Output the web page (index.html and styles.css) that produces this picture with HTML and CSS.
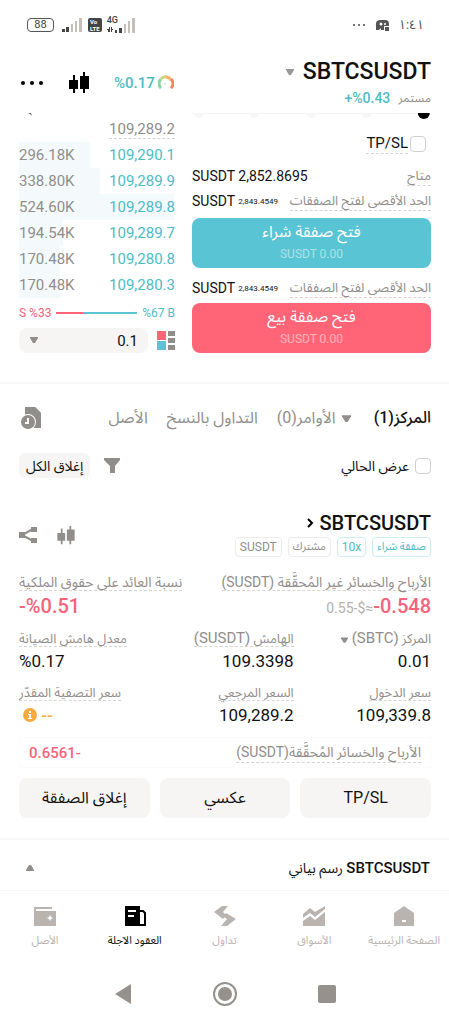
FILE: index.html
```html
<!DOCTYPE html>
<html lang="ar" dir="rtl">
<head>
    <meta charset="UTF-8">
    <meta name="viewport" content="width=device-width, initial-scale=1.0">
    <title>SBTCSUSDT</title>
    <link rel="stylesheet" href="styles.css">
</head>
<body>
    <!-- Status Bar -->
    <div class="status-bar">
        <div class="status-group">
            <span class="clock">١:٤١</span>
            <svg width="15" height="13" viewBox="0 0 15 13"><path d="M1 11V6a4 4 0 0 1 4-5h5a4 4 0 0 1 4 4v2H9v4H6V9L4 11z" fill="#555"/><circle cx="6" cy="5" r="1.5" fill="#fff"/><circle cx="10" cy="5" r="1" fill="#fff"/><path d="M10 8h4v4h-4z" fill="#555"/></svg>
            <svg width="14" height="4" viewBox="0 0 14 4" fill="#444"><circle cx="2" cy="2" r="1"/><circle cx="7" cy="2" r="1"/><circle cx="12" cy="2" r="1"/></svg>
        </div>
        <div class="status-group status-left" dir="ltr">
            <span class="battery">88</span>
            <svg width="21" height="14" viewBox="0 0 21 14"><path d="M0 11h3v3H0zM4 9h3v5H4z" fill="#444"/><path d="M9 6h2v8H9zM13 3h2v11h-2zM17 0h3v14h-3z" fill="#c6bfb9"/></svg>
            <span class="volte">Vo<br>LTE</span>
            <span class="network">
                <span class="network-type">4G</span>
                <svg width="28" height="15" viewBox="0 0 28 15"><path d="M0 11h2V9h1v5H1v-2H0zM4 9h1v2h1v1H5v2H4zM8 12h2v3H8zM12 10h3v5h-3z" fill="#444"/><path d="M17 6h2v9h-2zM21 3h2v12h-2zM25 0h3v15h-3z" fill="#c6bfb9"/></svg>
            </span>
        </div>
    </div>

    <!-- Header -->
    <header class="header">
        <div class="pair">
            <h1><span>SBTCSUSDT</span> <svg width="8" height="6" viewBox="0 0 8 6"><path d="M0 0h8v1L5 6H3L0 1z" fill="#999"/></svg></h1>
            <div class="pair-info"><span>مستمر</span> <span class="change" dir="ltr">+%0.43</span></div>
        </div>
        <div class="header-actions">
            <span class="margin-rate">
                <svg width="16" height="16" viewBox="0 0 16 16" fill="none" stroke-width="3"><path d="M3 13A6 6 0 0 1 3 4" stroke="#8ad7a5"/><path d="M3 4A6 6 0 0 1 9 2" stroke="#cfd77e"/><path d="M8 2A6 6 0 0 1 13 5" stroke="#f6b36b"/><path d="M13 4A6 6 0 0 1 13 13" stroke="#f58462"/><circle cx="7" cy="9" r="1" fill="#ddd"/></svg>
                <span dir="ltr">%0.17</span>
            </span>
            <svg width="20" height="22" viewBox="0 0 20 22"><path d="M0 8h4V3h2v5h3v9H6v4H4v-4H0zM11 4h3V0h2v4h4v13h-4v4h-2v-4h-3z" fill="#000"/></svg>
            <svg width="24" height="6" viewBox="0 0 24 6"><circle cx="3" cy="3" r="2"/><circle cx="12" cy="3" r="2"/><circle cx="21" cy="3" r="2"/></svg>
        </div>
    </header>

    <!-- Trade -->
    <main>
        <section class="trade">
            <form class="order-form">
                <svg class="steps" height="8"><rect width="100%" height="1" fill="#f4f4f4"/><circle cx="3%" cy="0" r="5" fill="#f6f6f6"/><circle cx="26%" cy="0" r="5" fill="#f6f6f6"/><circle cx="50%" cy="0" r="5" fill="#f6f6f6"/><circle cx="73%" cy="0" r="5" fill="#f6f6f6"/><circle cx="97%" cy="0" r="6" fill="#000"/></svg>
                <div class="tpsl">
                    <input type="checkbox" id="tpsl">
                    <label for="tpsl" class="dashed">TP/SL</label>
                </div>
                <div class="form-row available">
                    <span class="dashed muted">متاح</span>
                    <span dir="ltr">SUSDT 2,852.8695</span>
                </div>
                <div class="form-row">
                    <span class="dashed muted">الحد الأقصى لفتح الصفقات</span>
                    <span class="max" dir="ltr">SUSDT <small>2,843.4549</small></span>
                </div>
                <button type="button" class="order-button buy">فتح صفقة شراء<span dir="ltr">SUSDT 0.00</span></button>
                <div class="form-row">
                    <span class="dashed muted">الحد الأقصى لفتح الصفقات</span>
                    <span class="max" dir="ltr">SUSDT <small>2,843.4549</small></span>
                </div>
                <button type="button" class="order-button sell">فتح صفقة بيع<span dir="ltr">SUSDT 0.00</span></button>
            </form>

            <div class="book">
                <svg class="book-edge" width="4" height="3" viewBox="0 0 4 3"><path d="M0 0h3l1 3-2-2z" fill="#666"/></svg>
                <table>
                    <tr class="mark"><td><span class="dashed">109,289.2</span></td><td></td></tr>
                    <tr style="--depth: 46%"><td>109,290.1</td><td>296.18K</td></tr>
                    <tr style="--depth: 52%"><td>109,289.9</td><td>338.80K</td></tr>
                    <tr style="--depth: 100%"><td>109,289.8</td><td>524.60K</td></tr>
                    <tr style="--depth: 28%"><td>109,289.7</td><td>194.54K</td></tr>
                    <tr style="--depth: 26%"><td>109,280.8</td><td>170.48K</td></tr>
                    <tr style="--depth: 26%"><td>109,280.3</td><td>170.48K</td></tr>
                </table>
                <div class="ratio" dir="ltr">
                    <span class="red">S %33</span>
                    <span class="ratio-bar"><i style="width: 33%"></i></span>
                    <span class="teal">%67 B</span>
                </div>
                <div class="book-tools">
                    <svg width="18" height="19" viewBox="0 0 18 19"><path d="M0 0h9v9H0z" fill="#ff6577"/><path d="M0 10h9v9H0z" fill="#58c4d4"/><path d="M11 0h7v5h-7zM11 7h7v5h-7zM11 14h7v5h-7z" fill="#918d8b"/></svg>
                    <div class="select">
                        <select aria-label="الدقة"><option>0.1</option></select>
                        <svg width="8" height="6" viewBox="0 0 8 6"><path d="M0 0h8v1L5 6H3L0 1z" fill="#918d8b"/></svg>
                    </div>
                </div>
            </div>
        </section>

        <!-- Positions -->
        <section class="positions">
            <nav class="tabs">
                <a href="#" class="active">المركز(1)</a>
                <a href="#"><svg width="9" height="7" viewBox="0 0 8 6"><path d="M0 0h8v1L5 6H3L0 1z" fill="#918d8b"/></svg>الأوامر(0)</a>
                <a href="#">التداول بالنسخ</a>
                <a href="#">الأصل</a>
                <svg class="history" width="20" height="22" viewBox="0 0 20 22"><path d="M4 0h10l6 6v15h-7V8H4z" fill="#918d8b"/><path d="M4 0h10l6 6v15H4z" fill="#918d8b"/><circle cx="7" cy="15" r="8" fill="#fff"/><circle cx="7" cy="15" r="7" fill="#918d8b"/><path d="M7 11v5H4" fill="none" stroke="#fff" stroke-width="2"/></svg>
            </nav>
            <div class="filter-row">
                <input type="checkbox" id="current">
                <label for="current">عرض الحالي</label>
                <svg class="filter-icon" width="16" height="15" viewBox="0 0 16 15"><path d="M0 0h16v2l-5 6v7H6V8L0 2z" fill="#918d8b"/></svg>
                <button type="button" class="close-all">إغلاق الكل</button>
            </div>

            <article class="position">
                <div class="position-head">
                    <h2>SBTCSUSDT <svg width="7" height="12" viewBox="0 0 7 12"><path d="M1 1l4 4-4 4" fill="none" stroke="#000" stroke-width="2"/></svg></h2>
                    <div class="position-icons">
                        <svg width="18" height="19" viewBox="0 0 20 22"><path d="M0 8h4V3h2v5h3v9H6v4H4v-4H0zM11 4h3V0h2v4h4v13h-4v4h-2v-4h-3z" fill="#918d8b"/></svg>
                        <svg width="18" height="18" viewBox="0 0 18 18"><path d="M14 3L3 9l11 6" fill="none" stroke="#918d8b" stroke-width="2"/><path d="M12 1h6v5h-6zM0 6h6v6H0zM12 12h6v5h-6z" fill="#918d8b"/></svg>
                    </div>
                </div>
                <div class="tags">
                    <span class="tag tag-teal">صفقة شراء</span>
                    <span class="tag tag-teal tag-latin">10x</span>
                    <span class="tag">مشترك</span>
                    <span class="tag tag-latin">SUSDT</span>
                </div>
                <dl class="pnl">
                    <div>
                        <dt><span class="dashed">الأرباح والخسائر غير المُحقَّقة (SUSDT)</span></dt>
                        <dd class="red" dir="ltr"><small>0.55-$≈</small>-0.548</dd>
                    </div>
                    <div>
                        <dt><span class="dashed">نسبة العائد على حقوق الملكية</span></dt>
                        <dd class="red" dir="ltr">-%0.51</dd>
                    </div>
                </dl>
                <dl class="stats">
                    <div>
                        <dt>المركز <bdi>(SBTC)</bdi> <svg width="7" height="6" viewBox="0 0 8 6"><path d="M0 0h8v1L5 6H3L0 1z" fill="#918d8b"/></svg></dt>
                        <dd>0.01</dd>
                    </div>
                    <div>
                        <dt><span class="dashed">الهامش <bdi>(SUSDT)</bdi></span></dt>
                        <dd>109.3398</dd>
                    </div>
                    <div>
                        <dt><span class="dashed">معدل هامش الصيانة</span></dt>
                        <dd dir="ltr">%0.17</dd>
                    </div>
                    <div>
                        <dt><span class="dashed">سعر الدخول</span></dt>
                        <dd>109,339.8</dd>
                    </div>
                    <div>
                        <dt><span class="dashed">السعر المرجعي</span></dt>
                        <dd>109,289.2</dd>
                    </div>
                    <div>
                        <dt><span class="dashed">سعر التصفية المقدّر</span></dt>
                        <dd class="warning" dir="ltr"><svg width="14" height="14" viewBox="0 0 14 14"><circle cx="7" cy="7" r="7" fill="#f9aa3f"/><path d="M5 6h3v4h1v1H5v-1h1V7H5zM6 3h2v2H6z" fill="#fff"/></svg> --</dd>
                    </div>
                </dl>
                <div class="realized">
                    <span class="dashed">الأرباح والخسائر المُحقَّقة(SUSDT)</span>
                    <span class="red" dir="ltr">0.6561-</span>
                </div>
                <div class="position-actions">
                    <button type="button">TP/SL</button>
                    <button type="button">عكسي</button>
                    <button type="button">إغلاق الصفقة</button>
                </div>
            </article>
        </section>
    </main>

    <div class="chart-bar">
        <span><b>SBTCSUSDT</b> رسم بياني</span>
        <svg width="8" height="6" viewBox="0 0 8 6"><path d="M0 6h8V5L5 0H3L0 5z" fill="#918d8b"/></svg>
    </div>

    <!-- Bottom Navigation -->
    <nav class="bottom-nav">
        <a href="#"><svg width="22" height="22" viewBox="0 0 22 22"><path d="M11 1l10 7v13H1V8z" fill="#bab4b0"/><path d="M9 15h4v2H9z" fill="#fff"/></svg>الصفحة الرئيسية</a>
        <a href="#"><svg width="22" height="22" viewBox="0 0 22 22"><path d="M0 21v-5l7-5 5 4L22 7v14z" fill="#bab4b0"/><path d="M0 13v-4l7-6 5 4L22 1v3L12 12 7 8z" fill="#bab4b0"/></svg>الأسواق</a>
        <a href="#"><svg width="22" height="22" viewBox="0 0 22 22"><path d="M8 1h6L9 7l3 3-3 4-9-7zM12 8l10 6-9 7H7l6-7-3-2z" fill="#bab4b0"/></svg>تداول</a>
        <a href="#" class="active"><svg width="22" height="22" viewBox="0 0 22 22"><path d="M1 1h15v20H1z" fill="#000"/><path d="M16 6h3l2 2v12h-5" fill="none" stroke="#000" stroke-width="2"/><path d="M4 6h8M4 11h6" stroke="#fff" stroke-width="2"/></svg>العقود الآجلة</a>
        <a href="#"><svg width="22" height="22" viewBox="0 0 22 22"><path d="M0 2h18v2H2v2h20v15H0z" fill="#bab4b0"/><path d="M16 10l1 2 2 1-2 1-1 2-1-2-2-1 2-1z" fill="#fff"/></svg>الأصل</a>
    </nav>

    <div class="system-nav">
        <svg width="18" height="18" viewBox="0 0 18 18"><rect width="18" height="18" rx="2" fill="#96918d"/></svg>
        <svg width="26" height="26" viewBox="0 0 26 26"><circle cx="13" cy="13" r="11" fill="none" stroke="#96918d" stroke-width="2"/><circle cx="13" cy="13" r="7" fill="#96918d"/></svg>
        <svg width="18" height="22" viewBox="0 0 18 22"><path d="M1 11L17 1v20z" fill="#96918d"/></svg>
    </div>
</body>
</html>
```

FILE: styles.css
```css
/* General Styles */
* {
    margin: 0;
    padding: 0;
    box-sizing: border-box;
}

body {
    background-color: #fff;
    color: #111;
    font-family: Roboto, "Noto Sans Arabic", "DejaVu Sans", sans-serif;
    font-size: 14px;
    line-height: 20px;
}

button,
input,
select {
    font: inherit;
    color: inherit;
    border: none;
}

a {
    color: inherit;
    text-decoration: none;
}

svg {
    flex-shrink: 0;
}

input[type="checkbox"] {
    appearance: none;
    width: 16px;
    height: 16px;
    border: 1px solid #d2cecb;
    border-radius: 4px;
}

.dashed {
    border-bottom: 1px dashed #d8d4d2;
}

.muted {
    color: #918d8b;
}

.red {
    color: #f4647a;
}

.teal {
    color: #4dbcc4;
}

/* Status Bar */
.status-bar {
    display: flex;
    justify-content: space-between;
    align-items: center;
    height: 50px;
    padding: 0 25px 0 27px;
}

.status-group {
    display: flex;
    align-items: center;
    gap: 9px;
}

.status-left {
    gap: 5px;
}

.clock {
    color: #555;
    font-size: 13px;
}

.battery {
    width: 27px;
    margin-right: 3px;
    border: 1px solid #555;
    border-radius: 4px;
    color: #444;
    font-size: 11px;
    line-height: 12px;
    text-align: center;
}

.volte {
    padding: 0 2px;
    border-radius: 2px;
    background: #444;
    color: #fff;
    font-size: 6px;
    font-weight: 700;
    line-height: 7px;
}

.network {
    position: relative;
    display: flex;
}

.network-type {
    position: absolute;
    top: -3px;
    left: 0;
    color: #444;
    font-size: 9px;
    font-weight: 500;
    line-height: 10px;
}

/* Header */
.header {
    display: flex;
    justify-content: space-between;
    height: 63px;
    padding: 8px 18px 0 20px;
}

.header h1 {
    display: flex;
    align-items: center;
    gap: 9px;
    font-size: 23px;
    font-weight: 500;
    line-height: 28px;
}

.pair-info {
    display: flex;
    gap: 8px;
    line-height: 24px;
    color: #918d8b;
    font-size: 12px;
}

.change {
    color: #4dbcc4;
    font-size: 14px;
    font-weight: 500;
}

.header-actions {
    display: flex;
    align-items: center;
    gap: 25px;
    height: 50px;
}

.margin-rate {
    display: flex;
    align-items: center;
    gap: 3px;
    color: #4dbcc4;
    font-size: 15px;
    font-weight: 500;
}

/* Trade */
.trade {
    display: grid;
    grid-template-columns: 239fr 156fr;
    gap: 17px;
    padding: 0 18px 29px 19px;
    border-bottom: 2px solid #f9f9f9;
}

.steps {
    display: block;
    width: 100%;
}

.tpsl {
    display: flex;
    align-items: center;
    gap: 2px;
    margin: 13px 5px 12px;
    font-size: 15px;
    line-height: 19px;
}

.form-row {
    display: flex;
    justify-content: space-between;
    align-items: center;
    height: 20px;
    white-space: nowrap;
}

.form-row .dashed {
    font-size: 13px;
    line-height: 18px;
}

.available {
    margin-bottom: 5px;
}

.max small {
    font-size: 8px;
    vertical-align: 2px;
}

.order-button {
    display: block;
    width: 100%;
    height: 50px;
    margin: 7px 0 10px;
    border-radius: 8px;
    color: #fff;
    font-size: 16px;
    line-height: 22px;
}

.order-button span {
    display: block;
    opacity: 0.5;
    font-size: 12px;
}

.buy {
    background: #58c4d4;
}

.sell {
    margin: 5px 0 0;
    background: #ff6577;
}

/* Order Book */
.book-edge {
    display: block;
    margin-right: auto;
    margin-left: 9px;
}

.book table {
    width: 100%;
    border-collapse: collapse;
    font-size: 15px;
}

.book tr {
    height: 26px;
    background: linear-gradient(to right, #f4fafc var(--depth, 0%), transparent var(--depth, 0%));
}

.book td {
    color: #4dbcc4;
}

.book td:last-child {
    color: #918d8b;
    text-align: left;
}

.book .mark td {
    color: #918d8b;
}

.ratio {
    display: flex;
    align-items: center;
    gap: 5px;
    margin: 5px 0;
    font-size: 12px;
}

.ratio-bar {
    flex: 1;
    height: 2px;
    background: #58c4d4;
}

.ratio-bar i {
    display: block;
    height: 2px;
    background: #ff6577;
}

.book-tools {
    display: flex;
    align-items: center;
    gap: 9px;
}

.select {
    position: relative;
    flex: 1;
}

.select select {
    appearance: none;
    display: block;
    width: 100%;
    height: 25px;
    padding: 0 10px;
    border-radius: 8px;
    background: #f7f5f4;
    font-size: 15px;
}

.select svg {
    position: absolute;
    top: 9px;
    left: 11px;
    pointer-events: none;
}

/* Tabs */
.tabs {
    display: flex;
    align-items: center;
    gap: 19px;
    padding: 22px 18px 0 21px;
    color: #918d8b;
    font-size: 16px;
    line-height: 24px;
    white-space: nowrap;
}

.tabs a {
    display: flex;
    align-items: center;
    gap: 6px;
}

.tabs .active {
    margin-left: 4px;
    color: #111;
    font-weight: 500;
}

.history {
    margin-right: auto;
}

.filter-row {
    display: flex;
    align-items: center;
    gap: 6px;
    padding: 23px 18px 0 19px;
    font-size: 14px;
}

.filter-icon {
    margin-right: auto;
}

.close-all {
    height: 25px;
    margin-right: 8px;
    padding: 0 7px;
    border-radius: 6px;
    background: #f7f5f4;
}

/* Position Card */
.position {
    padding: 33px 18px 20px 19px;
}

.position-head {
    display: flex;
    justify-content: space-between;
    height: 26px;
}

.position h2 {
    font-size: 20px;
    font-weight: 500;
    line-height: 24px;
}

.position-icons {
    display: flex;
    gap: 20px;
    padding-top: 15px;
}

.tags {
    display: flex;
    gap: 6px;
}

.tag {
    height: 20px;
    padding: 0 4px;
    border: 1px solid #eeebe9;
    border-radius: 4px;
    color: #918d8b;
    font-size: 11px;
    line-height: 18px;
}

.tag-latin {
    font-size: 12px;
}

.tag-teal {
    border-color: #cdeef0;
    color: #4dbcc4;
}

.pnl {
    display: flex;
    justify-content: space-between;
    margin: 15px 0 7px;
}

dt {
    color: #918d8b;
    font-size: 13px;
    line-height: 20px;
    white-space: nowrap;
}

.pnl dt {
    font-size: 14px;
}

dt bdi {
    font-size: 15px;
    line-height: 18px;
}

dd {
    font-size: 17px;
    line-height: 24px;
}

.pnl dd {
    font-size: 20px;
    font-weight: 500;
    line-height: 28px;
}

.pnl div:first-child dd {
    text-align: right;
}

.pnl small {
    color: #b5b0ad;
    font-size: 14px;
    font-weight: 400;
}

.stats {
    display: grid;
    grid-template-columns: 1fr 1fr 1fr;
    row-gap: 10px;
}

.stats div:nth-child(3n) {
    justify-self: end;
}

.stats dd[dir="ltr"] {
    text-align: left;
}

.stats .warning {
    padding-left: 4px;
    color: #f9aa3f;
    font-weight: 500;
}

.warning svg {
    vertical-align: -1px;
}

.realized {
    display: flex;
    justify-content: space-between;
    align-items: center;
    height: 31px;
    margin: 10px 0;
    padding: 0 9px;
    border: 1px solid #fcfbfb;
    color: #918d8b;
}

.realized .red {
    font-size: 15px;
    font-weight: 500;
}

.position-actions {
    display: grid;
    grid-template-columns: 1fr 1fr 1fr;
    gap: 10px;
}

.position-actions button {
    height: 40px;
    border-radius: 8px;
    background: #f7f5f4;
    font-size: 16px;
}

/* Chart Bar */
.chart-bar {
    display: flex;
    justify-content: space-between;
    align-items: center;
    height: 53px;
    padding: 6px 19px 0 26px;
    border-top: 2px solid #f9f9f9;
    border-bottom: 1px solid #f6f5f4;
    font-size: 14px;
}

.chart-bar b {
    font-size: 15px;
    font-weight: 500;
}

/* Bottom Navigation */
.bottom-nav {
    display: grid;
    grid-template-columns: repeat(5, 1fr);
    padding-top: 14px;
    color: #bab4b0;
    font-size: 11px;
    white-space: nowrap;
}

.bottom-nav a {
    display: flex;
    flex-direction: column;
    align-items: center;
    gap: 4px;
}

.bottom-nav .active {
    color: #111;
}

.system-nav {
    display: flex;
    justify-content: center;
    align-items: center;
    gap: 80px;
    padding: 30px 0 15px;
}
```
